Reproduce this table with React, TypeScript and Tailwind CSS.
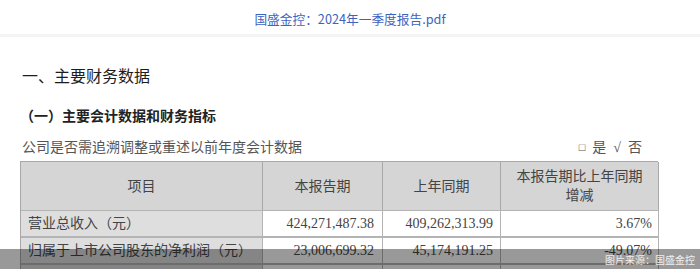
import React from 'react';

const serif = { fontFamily: '"Liberation Serif", "Noto Sans CJK SC", serif' };

const rows = [
  { label: '营业总收入（元）', cur: '424,271,487.38', prev: '409,262,313.99', delta: '3.67%' },
  { label: '归属于上市公司股东的净利润（元）', cur: '23,006,699.32', prev: '45,174,191.25', delta: '-49.07%' },
  { label: '', cur: '', prev: '', delta: '' },
];

export default function App() {
  return (
    <div className="relative w-[700px] h-[269px] overflow-hidden bg-white">
      <div className="h-[37px] flex justify-center items-center pt-[3px] border-b-[3px] border-[#f4f4f4]">
        <span
          className="text-[12.7px] text-[#3d63bf]"
          style={{ fontFamily: '"Noto Sans CJK SC", "Noto Sans", sans-serif' }}
        >
          国盛金控：2024年一季度报告.pdf
        </span>
      </div>

      <div className="px-[20px]">
        <h1
          className="mt-[27px] text-[16px] leading-[22px] text-[#1d1d1d] pl-[2px]"
          style={{ fontFamily: '"Noto Sans CJK SC", sans-serif' }}
        >
          一、主要财务数据
        </h1>
        <h2
          className="mt-[19px] text-[14px] leading-[20px] font-bold text-[#222]"
          style={{ fontFamily: '"Noto Sans CJK SC", sans-serif' }}
        >
          （一）主要会计数据和财务指标
        </h2>

        <div className="mt-[11px] w-[638px] flex justify-between items-center h-[22px] text-[#555]" style={serif}>
          <span className="text-[14px] pl-[2px]">公司是否需追溯调整或重述以前年度会计数据</span>
          <span className="text-[14px] pr-[16px] flex items-center gap-[7px]">
            <span className="text-[11px]">□</span>
            <span>是</span>
            <span>√</span>
            <span>否</span>
          </span>
        </div>

        <div
          className="mt-[3px] w-[638px] grid grid-cols-[242px_120px_118px_158px] border-l border-t border-[#a8a8a8] text-[14px] text-[#444]"
          style={serif}
        >
          <div className="h-[48px] bg-[#d5d5d5] border-r border-[#a8a8a8] flex items-center justify-center">项目</div>
          <div className="h-[48px] bg-[#d5d5d5] border-r border-[#a8a8a8] flex items-center justify-center">本报告期</div>
          <div className="h-[48px] bg-[#d5d5d5] border-r border-[#a8a8a8] flex items-center justify-center">上年同期</div>
          <div className="h-[48px] bg-[#d5d5d5] border-r border-[#a8a8a8] flex flex-col items-center justify-center leading-[19px]">
            <span>本报告期比上年同期</span>
            <span>增减</span>
          </div>

          {rows.map((r, i) => (
            <React.Fragment key={i}>
              <div className="h-[27px] bg-[#dedede] border-t border-b border-r border-[#b4b4b4] flex items-center pl-[7px]">
                {r.label}
              </div>
              <div className="h-[27px] border-t border-b border-r border-[#b4b4b4] flex items-center justify-end pr-[8px]">
                {r.cur}
              </div>
              <div className="h-[27px] border-t border-b border-r border-[#b4b4b4] flex items-center justify-end pr-[7px]">
                {r.prev}
              </div>
              <div className="h-[27px] border-t border-b border-r border-[#b4b4b4] flex items-center justify-end pr-[6px]">
                {r.delta}
              </div>
            </React.Fragment>
          ))}
        </div>
      </div>

      <div className="absolute left-0 right-0 top-[249px] h-[20px] bg-black/40 flex items-center justify-end pr-[5px]">
        <span
          className="text-[10px] text-white/85"
          style={{ fontFamily: '"Noto Sans CJK SC", sans-serif' }}
        >
          图片来源：国盛金控
        </span>
      </div>
    </div>
  );
}
